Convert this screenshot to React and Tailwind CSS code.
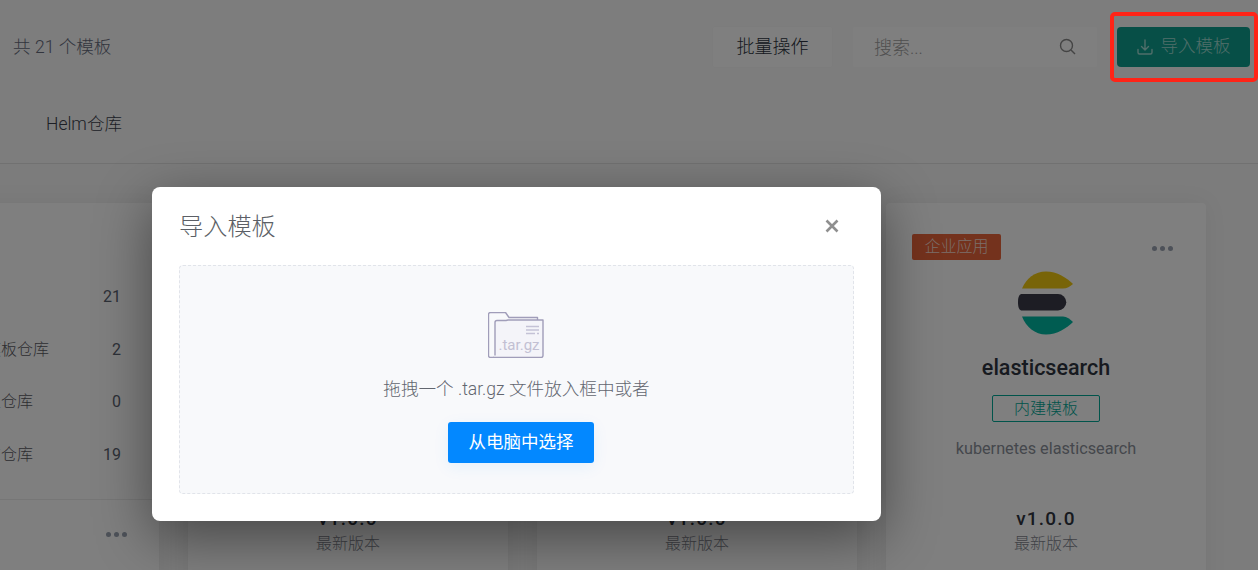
const font = { fontFamily: '"Roboto","Noto Sans CJK SC",sans-serif' };

function Dots({ className = "" }) {
  return (
    <div className={`flex gap-[3px] ${className}`}>
      <span className="h-[5px] w-[5px] rounded-full bg-[#9aa3b2]" />
      <span className="h-[5px] w-[5px] rounded-full bg-[#9aa3b2]" />
      <span className="h-[5px] w-[5px] rounded-full bg-[#9aa3b2]" />
    </div>
  );
}

function ElasticLogo() {
  return (
    <svg width="56" height="64" viewBox="0 0 56 64" fill="none">
      <path d="M4 17.500C8 7.500 17 0.500 28 0.500C39 0.500 49 7 55 13C52 15.500 49 17.500 45 17.500Z" fill="#f0c810" />
      <path d="M4 23H40a8.250 8.250 0 0 1 0 16.500H4C1.500 39.500 0 37 0 31.250S1.500 23 4 23Z" fill="#3a3a48" />
      <path d="M4 45.500C8 56 17 63.500 28 63.500C39 63.500 49 57 55 51C52 48 49 45.500 45 45.500Z" fill="#00b8a2" />
    </svg>
  );
}

function TemplateCard({ full }) {
  return (
    <div className="flex h-[400px] w-[320px] shrink-0 flex-col items-center rounded-sm bg-white pt-[31px] shadow-[0_0_24px_rgba(0,0,0,0.06)]">
      {full ? (
        <div className="flex h-[269px] w-full flex-col items-center">
          <div className="flex w-full items-start justify-between pl-[26px] pr-[33px]">
            <span className="flex h-[26px] w-[89px] items-center justify-center rounded-[2px] bg-[#e8643a] text-[16px] font-light text-[#f7dcd2]">企业应用</span>
            <Dots className="mt-[12px]" />
          </div>
          <div className="mt-[11px] h-[64px]"><ElasticLogo /></div>
          <div className="mt-[18px] text-[21.500px] leading-[30px] font-medium text-[#2f3440]">elasticsearch</div>
          <span className="mt-[12px] flex h-[27px] w-[108px] items-center justify-center rounded-[2px] border border-[#00a896] text-[16px] font-light text-[#00a896]">内建模板</span>
          <div className="mt-[15px] text-[16.250px] leading-[24px] text-[#8a8f99]">kubernetes elasticsearch</div>
        </div>
      ) : (
        <div className="h-[269px]" />
      )}
      <div className="mt-[4px] text-[19px] leading-[24px] font-medium tracking-[1.200px] text-[#2f3440]">v1.0.0</div>
      <div className="mt-[1px] text-[16px] leading-[24px] font-light text-[#7f848e]">最新版本</div>
    </div>
  );
}

function SideRow({ label, count }) {
  return (
    <div className="flex h-[52.500px] items-center justify-between text-[#5b6270]">
      <span className="text-[16px] font-light text-[#5a5a62]">{label}</span>
      <span className="text-[16px]">{count}</span>
    </div>
  );
}

function FolderIcon() {
  return (
    <svg width="56" height="46" viewBox="0 0 56 46" fill="none">
      <path d="M6 45.500H2.500A2 2 0 0 1 0.500 43.500V2.500A2 2 0 0 1 2.500 0.500H17.500L21 5.500H49.500V8" stroke="#a09db9" strokeWidth="1.400" strokeLinejoin="round" />
      <path d="M7 43.500V10.500A2 2 0 0 1 9 8.500H18L20 8H55V43.500A2 2 0 0 1 53 45.500H5" stroke="#a09db9" strokeWidth="1.400" fill="#f4f4f9" strokeLinejoin="round" />
      <path d="M38 14.500H51M38 18H51M38 21.500H47M49 21.500H51" stroke="#c4c2d6" strokeWidth="1.300" />
      <text x="31" y="38" textAnchor="middle" fontSize="15" fill="#c2c0d3" fontFamily="Roboto, sans-serif">.tar.gz</text>
    </svg>
  );
}

export default function App() {
  return (
    <div className="relative h-[570px] w-[1258px] overflow-hidden bg-[#f8f8f8]" style={font}>
      <header className="flex h-[164px] flex-col border-b border-[#e2e2e2] bg-[#fafafa]">
        <div className="flex h-[93px] items-center pl-[13px] pr-[8px]">
          <span className="mt-[2px] text-[17.600px] font-light text-[#656a7c]">共 21 个模板</span>
          <div className="ml-auto flex items-center">
            <button className="h-[40px] w-[119px] rounded-[2px] bg-white text-[18px] font-light text-[#2c3240] shadow-[0_0_2px_rgba(0,0,0,0.03)]">批量操作</button>
            <div className="ml-[21px] flex h-[40px] w-[244px] items-center justify-between rounded-[2px] bg-white pl-[21px] pr-[20px]">
              <span className="mt-[2px] text-[18px] font-light text-[#a0a0a0]">搜索...</span>
              <svg width="18" height="18" viewBox="0 0 18 18" fill="none" stroke="#888" strokeWidth="1.400"><circle cx="7.500" cy="7.500" r="6" /><path d="M12 12l4 4" /></svg>
            </div>
            <button className="ml-[20px] flex h-[40px] w-[133px] items-center justify-center gap-[8px] rounded-[4px] bg-[#0f9f8e] text-[17.500px] font-light text-[#a0dcd4]">
              <svg width="16" height="16" viewBox="0 0 16 16" fill="none" stroke="#a0dcd4" strokeWidth="1.400" strokeLinecap="round" strokeLinejoin="round"><path d="M8 1v9.500M4.500 7.500L8 11l3.500-3.500M1 10.500v3a1.500 1.500 0 0 0 1.500 1.500h11a1.500 1.500 0 0 0 1.500-1.500v-3" /></svg>
              导入模板
            </button>
          </div>
        </div>
        <div className="flex h-[60px] items-center pl-[46px] pt-[2px]">
          <span className="text-[17.500px] font-light text-[#3a3f4c]">Helm仓库</span>
        </div>
      </header>

      <main className="flex gap-[29px] pt-[39px]">
        <div className="-ml-[203px] h-[400px] w-[362px] shrink-0 rounded-sm bg-white shadow-[0_0_24px_rgba(0,0,0,0.06)]">
          <div className="pl-[156px] pr-[38px] pt-[68px]">
            <SideRow label="全部" count="21" />
            <SideRow label="内建模板仓库" count="2" />
            <SideRow label="自定义仓库" count="0" />
            <SideRow label="第三方仓库" count="19" />
          </div>
          <div className="mt-[18px] border-t border-[#ececec] pt-[32px]">
            <Dots className="ml-[309px]" />
          </div>
        </div>
        <TemplateCard />
        <TemplateCard />
        <TemplateCard full />
      </main>

      <div className="absolute inset-0 bg-black/50" />

      <div className="absolute left-[152px] top-[187px] h-[334px] w-[729px] rounded-[8px] bg-white px-[27px] shadow-[0_16px_56px_rgba(0,0,0,0.45)]">
        <div className="flex h-[78px] items-center justify-between pt-[2px]">
          <span className="text-[24.200px] font-light text-[#5c5f66]">导入模板</span>
          <svg className="mr-[15px] -mt-[2px]" width="14" height="14" viewBox="0 0 14 14" stroke="#8f8f8f" strokeWidth="2.600"><path d="M1.500 1.500l11 11M12.500 1.500l-11 11" /></svg>
        </div>
        <div className="flex h-[229px] w-[675px] flex-col items-center rounded-[4px] border border-dashed border-[#e1e4ea] bg-[#f8f9fb] pt-[46px]">
          <div className="-ml-[2px]"><FolderIcon /></div>
          <p className="mt-[19px] text-[17.600px] leading-[24px] font-light text-[#62666f]">拖拽一个 .tar.gz 文件放入框中或者</p>
          <button className="ml-[9px] mt-[21px] h-[41px] w-[146px] rounded-[3px] bg-[#0388ff] text-[17.500px] text-white shadow-[0_4px_16px_rgba(3,136,255,0.08)]">从电脑中选择</button>
        </div>
      </div>

      <div className="absolute left-[1110px] top-[12px] h-[70px] w-[148px] rounded-[5px] border-[4px] border-[#ff2417]" />
    </div>
  );
}
